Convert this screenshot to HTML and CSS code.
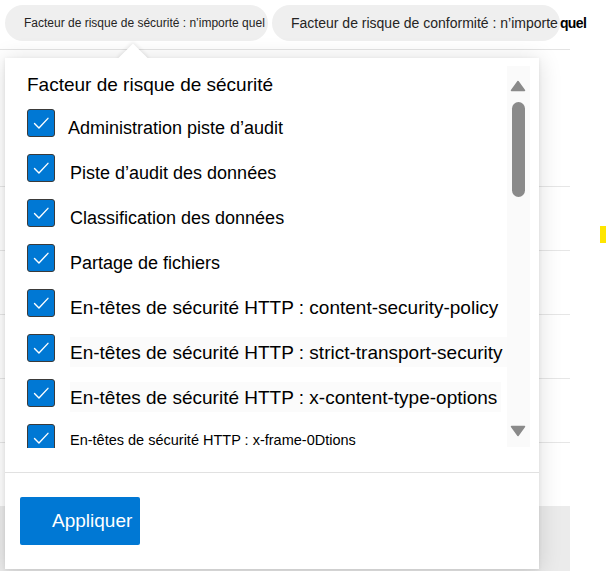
FILE: index.html
```html
<!DOCTYPE html>
<html lang="fr">
<head>
<meta charset="utf-8">
<title>Filtres</title>
<link rel="stylesheet" href="styles.css">
</head>
<body>
<div class="page">
  <div class="main">
    <div class="filters">
      <div class="pill pill-sec">Facteur de risque de sécurité : n’importe quel</div>
      <div class="pill pill-conf">Facteur de risque de conformité : n’importe <b>quel</b></div>
    </div>
    <div class="table">
      <div class="thead"></div>
      <div class="trow"></div>
      <div class="trow"></div>
      <div class="trow"></div>
      <div class="trow"></div>
      <div class="trow last"></div>
      <div class="tfoot"></div>
    </div>
  </div>
  <div class="side"><span class="mark"></span></div>
</div>

<div class="panel">
  <span class="caret"></span>
  <div class="panel-body">
    <div class="list">
      <div class="items">
        <div class="title">Facteur de risque de sécurité</div>
        <div class="row"><span class="cb"><svg viewBox="0 0 28 28"><polyline points="7,14.5 11.8,19.3 21.5,9"/></svg></span><span class="lbl first">Administration piste d’audit</span></div>
        <div class="row"><span class="cb"><svg viewBox="0 0 28 28"><polyline points="7,14.5 11.8,19.3 21.5,9"/></svg></span><span class="lbl">Piste d’audit des données</span></div>
        <div class="row"><span class="cb"><svg viewBox="0 0 28 28"><polyline points="7,14.5 11.8,19.3 21.5,9"/></svg></span><span class="lbl">Classification des données</span></div>
        <div class="row"><span class="cb"><svg viewBox="0 0 28 28"><polyline points="7,14.5 11.8,19.3 21.5,9"/></svg></span><span class="lbl">Partage de fichiers</span></div>
        <div class="row"><span class="cb"><svg viewBox="0 0 28 28"><polyline points="7,14.5 11.8,19.3 21.5,9"/></svg></span><span class="lbl big">En-têtes de sécurité HTTP : content-security-policy</span></div>
        <div class="row"><span class="cb"><svg viewBox="0 0 28 28"><polyline points="7,14.5 11.8,19.3 21.5,9"/></svg></span><span class="lbl big hl">En-têtes de sécurité HTTP : strict-transport-security</span></div>
        <div class="row"><span class="cb"><svg viewBox="0 0 28 28"><polyline points="7,14.5 11.8,19.3 21.5,9"/></svg></span><span class="lbl big hl">En-têtes de sécurité HTTP : x-content-type-options</span></div>
        <div class="row"><span class="cb"><svg viewBox="0 0 28 28"><polyline points="7,14.5 11.8,19.3 21.5,9"/></svg></span><span class="lbl small">En-têtes de sécurité HTTP : x-frame-0Dtions</span></div>
      </div>
      <div class="scroll">
        <svg class="arrow up" viewBox="0 0 16 12"><path d="M8 1.5 L14.5 10.5 L1.5 10.5 Z"/></svg>
        <span class="thumb"></span>
        <svg class="arrow down" viewBox="0 0 16 12"><path d="M1.5 1.5 L14.5 1.5 L8 10.5 Z"/></svg>
      </div>
    </div>
    <div class="footer">
      <button class="apply">Appliquer</button>
    </div>
  </div>
</div>
</body>
</html>
```

FILE: styles.css
```css
html, body {
  margin: 0;
  padding: 0;
}
body {
  width: 607px;
  height: 571px;
  overflow: hidden;
  position: relative;
  background: #ffffff;
  font-family: "Liberation Sans", Arial, sans-serif;
  color: #201f1e;
}
.page {
  display: flex;
}
.main {
  width: 570px;
}
.filters {
  display: flex;
  gap: 4px;
  padding: 5px 0 0 5px;
  height: 36px;
}
.pill {
  height: 36px;
  border-radius: 18px;
  background: #efefef;
  display: flex;
  align-items: center;
  white-space: nowrap;
  box-sizing: border-box;
  color: #252423;
}
.pill-sec {
  width: 263px;
  padding-left: 19px;
  font-size: 12px;
}
.pill-conf {
  width: 288px;
  padding-left: 19px;
  font-size: 14px;
  overflow: visible;
}
.pill-conf b {
  color: #000;
  letter-spacing: -0.6px;
  margin-left: 2px;
}
.table {
  margin-top: 8px;
  border-top: 1px solid #e3e3e3;
}
.thead {
  height: 136px;
  border-bottom: 1px solid #e6e6e6;
}
.trow {
  height: 63px;
  border-bottom: 1px solid #e6e6e6;
}
.trow.last {
  border-bottom: none;
}
.tfoot {
  height: 66px;
  background: #ebebeb;
}
.side {
  flex: 1;
  padding: 226px 0 0 30px;
}
.mark {
  display: block;
  width: 6px;
  height: 17px;
  background: #ffe600;
}

/* dropdown panel */
.panel {
  position: absolute;
  left: 5px;
  top: 58px;
  width: 534px;
  height: 511px;
  background: #fff;
  box-shadow: 0 2px 22px rgba(0, 0, 0, 0.14), 0 1px 4px rgba(0, 0, 0, 0.08);
}
.caret {
  position: absolute;
  left: 117px;
  top: -10px;
  width: 22px;
  height: 22px;
  background: #fff;
  transform: rotate(45deg);
  box-shadow: -1px -1px 4px rgba(0, 0, 0, 0.09);
}
.panel-body {
  position: relative;
  background: #fff;
  height: 100%;
}
.list {
  height: 390px;
  overflow: hidden;
  display: grid;
  grid-template-columns: 1fr 23px;
  padding-right: 15px;
}
.items {
  padding: 16px 0 0 22px;
}
.title {
  font-size: 19px;
  line-height: 22px;
  color: #000;
  margin-bottom: 13px;
}
.row {
  display: flex;
  align-items: flex-start;
  gap: 15px;
  height: 45px;
}
.cb {
  flex: none;
  width: 28px;
  height: 28px;
  box-sizing: border-box;
  background: #0078d4;
  border: 1px solid #3b3a39;
  border-radius: 3px;
  display: block;
}
.cb svg {
  display: block;
  width: 26px;
  height: 26px;
}
.cb polyline {
  fill: none;
  stroke: #fff;
  stroke-width: 1.5;
  stroke-linecap: round;
  stroke-linejoin: round;
}
.lbl {
  white-space: nowrap;
  font-size: 18px;
  line-height: 22px;
  padding-top: 8px;
  color: #000;
}
.lbl.first {
  margin-left: -2px;
}
.lbl.big {
  font-size: 19px;
}
.lbl.hl {
  background: #fbfbfb;
  padding: 5px 4px 3px 0;
  margin-top: 3px;
}
.lbl.small {
  font-size: 14.5px;
  padding-top: 5px;
}
.scroll {
  margin-top: 8px;
  height: 381px;
  background: #fafafa;
  display: flex;
  flex-direction: column;
  align-items: center;
}
.arrow {
  width: 16px;
  height: 12px;
  display: block;
}
.arrow path {
  fill: #8a8a8a;
  stroke: #8a8a8a;
  stroke-width: 1.5;
  stroke-linejoin: round;
}
.arrow.up {
  margin-top: 14px;
}
.thumb {
  display: block;
  width: 13px;
  height: 95px;
  border-radius: 7px;
  background: #8a8a8a;
  margin-top: 10px;
}
.arrow.down {
  margin-top: auto;
  margin-bottom: 10px;
}
.footer {
  margin-top: 24px;
  border-top: 1px solid #e1e1e1;
  padding: 24px 15px;
}
.apply {
  display: block;
  width: 120px;
  height: 48px;
  border: none;
  border-radius: 2px;
  background: #0078d4;
  color: #fff;
  font-family: "Liberation Sans", Arial, sans-serif;
  font-size: 19px;
  text-align: left;
  padding: 0 0 0 32px;
}
```
